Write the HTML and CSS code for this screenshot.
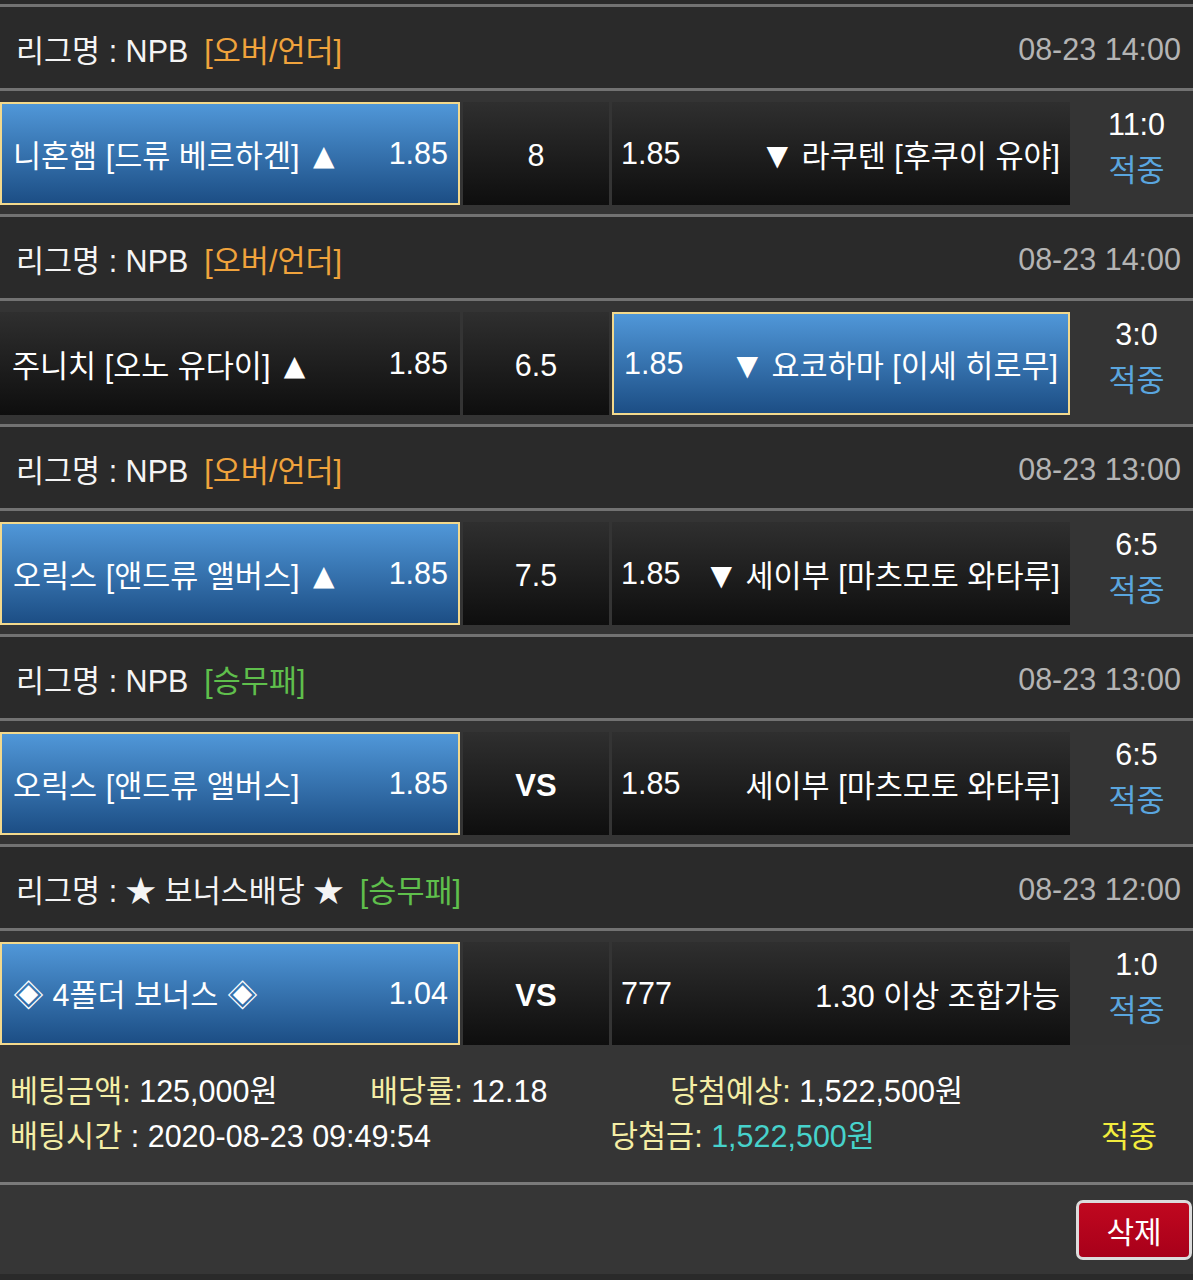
FILE: index.html
```html
<!DOCTYPE html>
<html lang="ko">
<head>
<meta charset="utf-8">
<title>배팅내역</title>
<link rel="stylesheet" href="styles.css">
</head>
<body>
<div class="list">
  <section class="block">
    <div class="league"><span class="lname">리그명 : NPB</span><span class="type ou">[오버/언더]</span><span class="date">08-23 14:00</span></div>
    <div class="bet">
      <div class="cell home sel"><span>니혼햄 [드류 베르하겐] <span class="tri">▲</span></span><span>1.85</span></div>
      <div class="cell mid">8</div>
      <div class="cell away"><span>1.85</span><span><span class="tri">▼</span> 라쿠텐 [후쿠이 유야]</span></div>
      <div class="result"><div class="score">11:0</div><div class="hit">적중</div></div>
    </div>
  </section>
  <section class="block">
    <div class="league"><span class="lname">리그명 : NPB</span><span class="type ou">[오버/언더]</span><span class="date">08-23 14:00</span></div>
    <div class="bet">
      <div class="cell home"><span>주니치 [오노 유다이] <span class="tri">▲</span></span><span>1.85</span></div>
      <div class="cell mid">6.5</div>
      <div class="cell away sel"><span>1.85</span><span><span class="tri">▼</span> 요코하마 [이세 히로무]</span></div>
      <div class="result"><div class="score">3:0</div><div class="hit">적중</div></div>
    </div>
  </section>
  <section class="block">
    <div class="league"><span class="lname">리그명 : NPB</span><span class="type ou">[오버/언더]</span><span class="date">08-23 13:00</span></div>
    <div class="bet">
      <div class="cell home sel"><span>오릭스 [앤드류 앨버스] <span class="tri">▲</span></span><span>1.85</span></div>
      <div class="cell mid">7.5</div>
      <div class="cell away"><span>1.85</span><span><span class="tri">▼</span> 세이부 [마츠모토 와타루]</span></div>
      <div class="result"><div class="score">6:5</div><div class="hit">적중</div></div>
    </div>
  </section>
  <section class="block">
    <div class="league"><span class="lname">리그명 : NPB</span><span class="type wdl">[승무패]</span><span class="date">08-23 13:00</span></div>
    <div class="bet">
      <div class="cell home sel"><span>오릭스 [앤드류 앨버스]</span><span>1.85</span></div>
      <div class="cell mid vs">VS</div>
      <div class="cell away"><span>1.85</span><span>세이부 [마츠모토 와타루]</span></div>
      <div class="result"><div class="score">6:5</div><div class="hit">적중</div></div>
    </div>
  </section>
  <section class="block last">
    <div class="league"><span class="lname">리그명 : ★ 보너스배당 ★</span><span class="type wdl">[승무패]</span><span class="date">08-23 12:00</span></div>
    <div class="bet">
      <div class="cell home sel"><span>◈ 4폴더 보너스 ◈</span><span>1.04</span></div>
      <div class="cell mid vs">VS</div>
      <div class="cell away"><span>777</span><span>1.30 이상 조합가능</span></div>
      <div class="result"><div class="score">1:0</div><div class="hit">적중</div></div>
    </div>
    <div class="summary">
      <div class="sline">
        <span class="s1"><span class="lbl">베팅금액:</span> 125,000원</span>
        <span class="s2"><span class="lbl">배당률:</span> 12.18</span>
        <span class="s3"><span class="lbl">당첨예상:</span> 1,522,500원</span>
      </div>
      <div class="sline">
        <span class="s1"><span class="lbl">배팅시간</span> : 2020-08-23 09:49:54</span>
        <span class="s4"><span class="lbl">당첨금:</span> <span class="win">1,522,500원</span></span>
        <span class="s5">적중</span>
      </div>
    </div>
  </section>
</div>
<div class="actions"><button class="del" type="button">삭제</button></div>
</body>
</html>
```

FILE: styles.css
```css
html, body {
  margin: 0;
  padding: 0;
}
body {
  background: #2a2a2a;
  font-family: "Liberation Sans", "Noto Sans CJK KR", sans-serif;
  font-size: 30.5px;
  color: #fff;
  padding-top: 4px;
  width: 1193px;
  overflow: hidden;
}
.block {
  border-top: 3px solid #727272;
}
.league {
  background: #2a2a2a;
  display: flex;
  align-items: center;
  padding: 3px 12px 0 16px;
  box-sizing: border-box;
  border-bottom: 3px solid #727272;
  height: 84px;
  white-space: nowrap;
}
.lname { color: #f4f4f4; }
.type { margin-left: 16px; }
.type.ou { color: #f0a33c; }
.type.wdl { color: #5fbf4c; }
.date { margin-left: auto; color: #b4b4b4; }

.bet {
  background: #343434;
  display: flex;
  padding: 11px 0 9px 0;
  height: 123px;
  box-sizing: border-box;
}
.cell {
  height: 103px;
  box-sizing: border-box;
  background: linear-gradient(#2f2f2f, #0e0e0e);
  display: flex;
  align-items: center;
  justify-content: space-between;
  color: #fff;
  white-space: nowrap;
}
.home { width: 460px; padding: 0 12px 0 12px; }
.mid { width: 146px; margin-left: 3px; justify-content: center; padding-top: 4px; }
.away { width: 458px; margin-left: 3px; padding: 0 10px 0 9px; }
.vs { font-weight: bold; font-size: 31px; }
.tri {
  font-family: "DejaVu Sans", sans-serif;
  font-size: 28px;
  vertical-align: 2px;
  margin: 0 5px;
}
.cell.sel {
  background: linear-gradient(#5097d8, #1c4e85);
  border: 2px solid #f3d98c;
}
.home.sel { padding-left: 11px; padding-right: 10px; }
.away.sel { padding-left: 10px; padding-right: 10px; }
.result {
  flex: 1;
  display: flex;
  flex-direction: column;
  align-items: center;
  justify-content: flex-start;
  padding-left: 10px;
}
.score { height: 45px; line-height: 45px; color: #fff; }
.hit { height: 47px; line-height: 47px; color: #5aa5de; }

.last .bet { height: 114px; padding-bottom: 0; }
.summary {
  background: #353535;
  padding: 21px 0 26px 10px;
}
.sline {
  display: flex;
  height: 45px;
  align-items: center;
  white-space: nowrap;
}
.lbl { color: #f4eea6; }
.s1 { width: 360px; }
.s2 { width: 300px; }
.s4 { width: 491px; margin-left: 240px; }
.s5 { color: #f2ec3e; }
.win { color: #47d2cb; }

.actions {
  background: #363636;
  border-top: 3px solid #7a7a7a;
  display: flex;
  justify-content: flex-end;
  padding: 15px 1px 0 0;
  height: 92px;
  box-sizing: border-box;
}
.del {
  width: 116px;
  height: 60px;
  border: 3px solid #dcdcdc;
  border-radius: 7px;
  background: linear-gradient(#c0081f, #a8001a);
  color: #fff;
  font-family: "Liberation Sans", "Noto Sans CJK KR", sans-serif;
  font-size: 30px;
  padding: 0;
}
```
